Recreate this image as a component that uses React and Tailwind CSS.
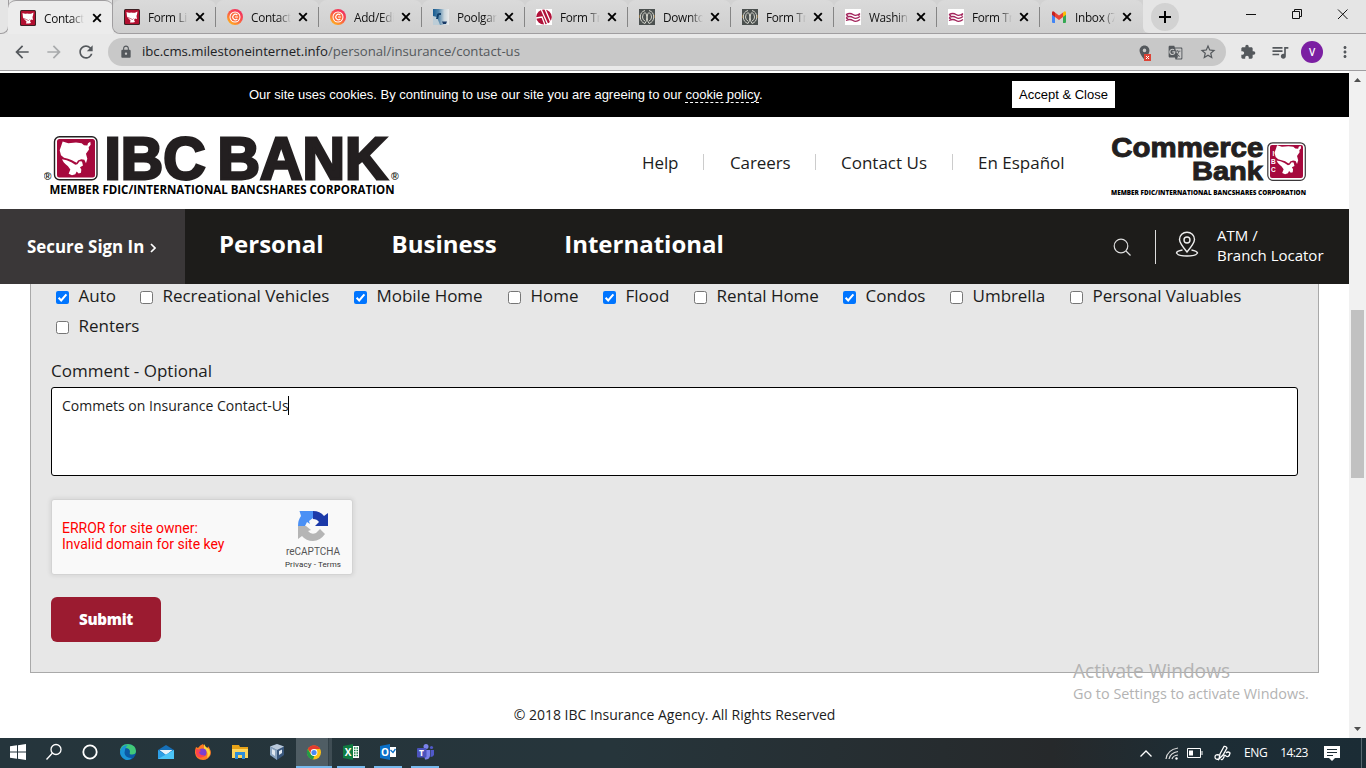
import React from "react";
import {
  MdArrowBack, MdArrowForward, MdRefresh, MdLock, MdStarBorder,
  MdExtension, MdQueueMusic, MdMoreVert, MdGTranslate, MdLocationOn,
} from "react-icons/md";

const US = "M188 96 L205 101 L228 99 L245 101 L252 107 L262 108 L264 101 L271 97 L272 106 L266 113 L267 120 L258 133 L262 148 L258 161 L253 151 L244 149 L234 153 L230 160 L224 157 L216 152 L204 148 L192 145 L183 137 L179 122 L184 108 Z";
const MX = "M186 149 L200 152 L214 158 L226 166 L232 164 L239 155 L246 156 L249 168 L240 173 L244 180 L243 190 L236 192 L230 186 L226 194 L216 197 L206 193 L211 180 L204 170 L197 164 L191 158 Z";

function BankMark() {
  return (
    <svg width="16" height="16" viewBox="0 0 16 16">
      <rect width="16" height="16" rx="1.500" fill="#3b2023" />
      <rect x="1" y="1" width="14" height="14" rx="1" fill="#b20f30" />
      <path d="M2.500 3Q4.500 4.200 7 3.500Q9.500 4 11 3.800L13.500 2.500L13 5.500L12.500 7L13 10L11 9.500L10 11L11 13L9 13.500L6 13.500L6.500 11.500L4.500 9.500L3 7.500Z" fill="#fff" />
      <path d="M4 8.500L8.500 10.500L9.500 9.500" stroke="#b20f30" strokeWidth=".6" fill="none" />
    </svg>
  );
}

function CIcon() {
  return (
    <svg width="16" height="16" viewBox="0 0 16 16">
      <defs><linearGradient id="cg" x1="1" y1="0" x2="0.3" y2="1"><stop offset="0" stopColor="#ee2266" /><stop offset=".5" stopColor="#f94f4c" /><stop offset="1" stopColor="#ffae1f" /></linearGradient></defs>
      <circle cx="8" cy="8" r="8" fill="url(#cg)" />
      <circle cx="8" cy="8" r="5.500" fill="#fff" /><circle cx="8" cy="8" r="4.500" fill="#fb6a3a" />
      <path d="M10.300 6A2.700 2.700 0 1 0 10.300 10M8 8H11" fill="none" stroke="#fff" strokeWidth="1.100" />
    </svg>
  );
}
function PoolIcon() {
  return (
    <svg width="16" height="16" viewBox="0 0 16 16">
      <defs><linearGradient id="pg" x1="0" x2="1"><stop offset="0" stopColor="#165a90" /><stop offset=".35" stopColor="#4f83a8" /><stop offset=".7" stopColor="#c9d5dc" /><stop offset="1" stopColor="#e9eaea" /></linearGradient></defs>
      <path d="M0 0H16V16H0Z" fill="url(#pg)" />
      <path d="M0 7L4 8L7 16H0Z" fill="#bccdd7" /><path d="M4 6Q4 3.500 8 4V6H6L5 10H3Z" fill="#12406b" /><path d="M9 12.500h5l-1 2.500h-3Z" fill="#183a67" />
    </svg>
  );
}
function SlashIcon() {
  return (
    <svg width="16" height="16" viewBox="0 0 16 16">
      <path d="M0 0H16V16H0Z" fill="#fff" /><ellipse cx="8" cy="8" rx="7.800" ry="7.500" fill="#b0123a" />
      <path d="M5 0L12 16M9 0L15 14M0 9L6 8L9 16" stroke="#fff" strokeWidth="1.300" fill="none" />
    </svg>
  );
}
function RingsIcon() {
  return (
    <svg width="16" height="16" viewBox="0 0 16 16">
      <path d="M0 0H16V16H0Z" fill="#4b504f" />
      <g fill="none" stroke="#d3d3cb" strokeWidth="1"><path d="M6 1.500Q1.200 3 1.300 8T6 14.500Q8 12 7.800 8T6 3.500Q3.500 5 3.500 8T6 12" /><path d="M10 1.500Q14.800 3 14.700 8T10 14.500Q8 12 8.200 8T10 3.500Q12.500 5 12.500 8T10 12" /></g>
      <path d="M0 6v3M16 6v3" stroke="#b78338" />
    </svg>
  );
}
function WavesIcon() {
  return (
    <svg width="16" height="16" viewBox="0 0 16 16">
      <path d="M0 0H16V16H0Z" fill="#fff" />
      <path d="M1 5.500q4-2 7 0t7-1M1 8.500q4-2 7 0t7-1M1 11.500q4-2 7 0t7-1M1 5.500l2 1.600M13 6.500l2-1M1 8.700l2 1.400" stroke="#a3255c" strokeWidth="1.300" fill="none" />
    </svg>
  );
}
function GmailIcon() {
  return (
    <svg width="16" height="16" viewBox="0 0 16 16">
      <path d="M1 5l3 2v7H2q-1 0-1-1Z" fill="#4285f4" /><path d="M12 7l3-2v8q0 1-1 1h-2Z" fill="#34a853" />
      <path d="M4 3.500L8 6.500L12 3.500V8L8 11L4 8Z" fill="#ea4335" /><path d="M1 4q0-3 3-.5V8L1 5.700Z" fill="#c5221f" /><path d="M15 4q0-3-3-.5V8L15 5.700Z" fill="#fbbc04" />
    </svg>
  );
}

const tabs = [
  { t: "Form Li", i: <BankMark /> },
  { t: "Contact", i: <CIcon /> },
  { t: "Add/Edi", i: <CIcon /> },
  { t: "Poolgar", i: <PoolIcon /> },
  { t: "Form Tr", i: <SlashIcon /> },
  { t: "Downto", i: <RingsIcon /> },
  { t: "Form Tr", i: <RingsIcon /> },
  { t: "Washin", i: <WavesIcon /> },
  { t: "Form Tr", i: <WavesIcon /> },
  { t: "Inbox (7", i: <GmailIcon /> },
];

function TabInner({ t, i, gap }) {
  return (
    <>
      <div className="h-4 w-4 shrink-0">{i}</div>
      <div className="ml-2 w-10 shrink-0 overflow-hidden whitespace-nowrap text-[11.800px] leading-4 tracking-[-0.3px] text-[#111] [mask-image:linear-gradient(90deg,#000_68%,transparent)]">{t}</div>
      <svg className={"shrink-0 " + gap} width="10" height="10" viewBox="0 0 10 10"><path d="M1.200 1.200L8.800 8.800M8.800 1.200L1.200 8.800" stroke="#000" strokeWidth="1.900" /></svg>
    </>
  );
}

function Chrome() {
  return (
    <div className="h-[71px] bg-[#e9e9e9]">
      <div className="flex h-[34px] bg-[#e5e5e5]">
        <div className="w-[9px] rounded-br-lg border-b border-r border-[#a09ea0]" />
        <div className="-ml-px flex h-[34px] w-[105px] items-center rounded-t-lg border-t border-[#a09ea0] bg-[#ececec] pl-3"><TabInner t="Contact" i={<BankMark />} gap="ml-2" /></div>
        <div className="-ml-px flex flex-1 rounded-bl-lg border-b border-l border-[#a09ea0] bg-[#d2d2d2]">
          {tabs.map((x, k) => (
            <div key={k} className={"flex h-[33px] w-[103px] shrink-0 items-center rounded-t-lg bg-gradient-to-b from-[#dadada] to-[#cfcfcf] pl-[11px] " + (k === 0 ? "rounded-bl-lg" : "")}>
              <TabInner {...x} gap="ml-[7px]" />
              <div className={"ml-auto h-5 w-px " + (k < 9 ? "bg-[#858585]" : "")} />
            </div>
          ))}
          <div className="-mr-px flex flex-1 items-center rounded-bl-md bg-[#e5e5e5] pl-[8px]">
            <div className="grid h-7 w-7 place-items-center rounded-full bg-[#d2d2d2]">
              <svg width="12" height="12" viewBox="0 0 12 12"><path d="M6 0V12M0 6H12" stroke="#000" strokeWidth="2" /></svg>
            </div>
            <svg className="mb-[5px] ml-[67px]" width="112" height="12" viewBox="0 0 112 12" fill="none" stroke="#111"><path d="M0 6.500H10M46.500 3.500H53.500V10.500H46.500ZM48.500 3.500V1.500H55.500V8.500H53.500M92 1.500L101.500 11M101.500 1.500L92 11" /></svg>
          </div>
        </div>
      </div>
      <div className="flex h-[37px] items-center border-b border-[#9f9da0] text-[#54585c]">
        <MdArrowBack className="ml-3 shrink-0" size={20} />
        <MdArrowForward className="ml-3 shrink-0 text-[#a8aaac]" size={20} />
        <MdRefresh className="ml-3 shrink-0" size={20} />
        <div className="ml-3 flex h-7 w-[1118px] items-center rounded-full bg-[#c8c8c8] pl-[11px] pr-[9px]">
          <MdLock size={14} />
          <span className="ml-[9px] text-[13.200px] tracking-[-0.02px] text-[#54585c]"><span className="text-[#202124]">ibc.cms.milestoneinternet.info</span>/personal/insurance/contact-us</span>
          <div className="relative ml-auto">
            <MdLocationOn size={17} />
            <svg className="absolute bottom-0 left-[8px]" width="7" height="7"><path d="M0 0H7V7H0Z" fill="#dc4437" /><path d="M2 2L5 5M5 2L2 5" stroke="#fff" /></svg>
          </div>
          <MdGTranslate className="ml-[15px]" size={15} />
          <MdStarBorder className="ml-[16px]" size={18} />
        </div>
        <MdExtension className="ml-[14px]" size={16} />
        <MdQueueMusic className="ml-[14px]" size={20} />
        <div className="ml-[11px] grid h-[22px] w-[22px] place-items-center rounded-full bg-[#7b1fa2] text-[10px] font-semibold text-white">V</div>
        <MdMoreVert className="ml-[13px]" size={18} />
      </div>
    </div>
  );
}

function Header() {
  return (
    <header className="flex h-[92px] shrink-0 items-start bg-white">
      <svg className="ml-[44px] mt-[16px]" width="358" height="64" viewBox="44 133 358 64" fontFamily="Liberation Sans, sans-serif">
        <rect x="54.500" y="136.800" width="42.500" height="43" rx="5" fill="#fff" stroke="#231f20" strokeWidth="1.400" />
        <rect x="57" y="139" width="38" height="38.500" rx="2.500" fill="#a6093d" />
        <g transform="translate(0 109.500) scale(.3333)" fill="#fff"><path d={US} /><path d={MX} /></g>
        <text x="104.500" y="179" fontSize="59" fontWeight="700" textLength="101" lengthAdjust="spacingAndGlyphs" fill="#231f20" stroke="#231f20" strokeWidth="2.800">IBC</text>
        <text x="217.500" y="179" fontSize="59" fontWeight="700" textLength="170" lengthAdjust="spacingAndGlyphs" fill="#231f20" stroke="#231f20" strokeWidth="2.800">BANK</text>
        <text x="43.800" y="180" fontSize="10.500" fontWeight="700" fill="#231f20">®</text>
        <text x="391" y="180" fontSize="10.500" fontWeight="700" fill="#231f20">®</text>
        <text x="49.500" y="194" fontSize="12" fontWeight="700" fontFamily="Open Sans, sans-serif" textLength="345" lengthAdjust="spacingAndGlyphs">MEMBER FDIC/INTERNATIONAL BANCSHARES CORPORATION</text>
      </svg>
      <nav className="ml-[240px] mt-[34px] flex w-[468px] text-[17px] leading-6 text-[#1c1c1c]">
        <span className="w-[61px] tracking-[-0.1px]">Help</span><i className="mt-[3px] h-4 w-px bg-[#ccc]" />
        <span className="ml-[26px] w-[85px] tracking-[-0.1px]">Careers</span><i className="mt-[3px] h-4 w-px bg-[#ccc]" />
        <span className="ml-[25px] w-[111px]">Contact Us</span><i className="mt-[3px] h-4 w-px bg-[#ccc]" />
        <span className="ml-[25px] whitespace-nowrap">En Español</span>
      </nav>
      <svg className="mt-[16px]" width="198" height="64" viewBox="1110 133 198 64" fontFamily="Liberation Sans, sans-serif" fill="#231f20">
        <text x="1111.300" y="157.300" fontSize="28" fontWeight="700" textLength="152" lengthAdjust="spacingAndGlyphs" stroke="#231f20" strokeWidth="1">Commerce</text>
        <text x="1192" y="180.200" fontSize="26.500" fontWeight="700" textLength="71" lengthAdjust="spacingAndGlyphs" stroke="#231f20" strokeWidth="1">Bank</text>
        <rect x="1267.800" y="142.800" width="37.500" height="37.500" rx="5" fill="#fff" stroke="#3b383a" strokeWidth="1.200" />
        <rect x="1270" y="145" width="33" height="33" rx="2" fill="#a6093d" />
        <g transform="translate(1223.500 118) scale(.285)" fill="#fff"><path d={US} /><path d={MX} /></g>
        <g fill="#fff" fontSize="6.500" fontWeight="700"><text x="1272.500" y="155.500">I</text><text x="1271" y="163.500">B</text><text x="1271" y="171.500">C</text></g>
        <text x="1111" y="195" fontSize="6.500" fontWeight="800" fontFamily="Open Sans, sans-serif" textLength="195" lengthAdjust="spacingAndGlyphs" fill="#000">MEMBER FDIC/INTERNATIONAL BANCSHARES CORPORATION</text>
      </svg>
    </header>
  );
}

const boxes = [["Auto", 1], ["Recreational Vehicles", 0], ["Mobile Home", 1], ["Home", 0], ["Flood", 1], ["Rental Home", 0], ["Condos", 1], ["Umbrella", 0], ["Personal Valuables", 0], ["Renters", 0]];

function Check({ on }) {
  return on ? (
    <svg className="mt-[2px] shrink-0" width="13" height="13" viewBox="0 0 13 13"><rect width="13" height="13" rx="2" fill="#0075ff" /><path d="M2.600 6.800L5.200 9.500L10.400 3.300" stroke="#fff" strokeWidth="2" fill="none" /></svg>
  ) : <div className="mt-[2px] h-[13px] w-[13px] shrink-0 rounded-[2.500px] border border-[#767676] bg-white" />;
}

function Form() {
  return (
    <div className="ml-[30px] h-[389px] w-[1289px] shrink-0 border border-t-0 border-[#a9a9a9] bg-[#e7e7e7] px-5 text-[#1c1c1c]">
      <div className="grid grid-cols-[84px_214px_154px_95px_91px_149px_107px_120px_173px] pl-[5px] text-[17px] leading-[30px] tracking-[-0.05px]">
        {boxes.map(([t, on]) => (
          <label key={t} className="-mt-[3px] mb-[3px] flex h-[30px] items-center whitespace-nowrap">
            <Check on={on} /><span className="ml-[9.600px]">{t}</span>
          </label>
        ))}
      </div>
      <div className="mt-[14px] h-[29px] text-[17px] leading-[26px]">Comment - Optional</div>
      <div className="flex h-[89px] w-[1247px] rounded-[3px] border border-black bg-white pl-[10px] pt-2 text-[14px] leading-5">
        <span>Commets on Insurance Contact-Us</span><span className="-ml-px h-[19px] w-px bg-black" />
      </div>
      <div className="mt-[23px] flex h-[76px] w-[302px] justify-between rounded-[3px] border border-[#d3d3d3] bg-[#f9f9f9] pl-[10px] pr-[9px] font-[Roboto,sans-serif] shadow-[0_0_4px_1px_rgba(0,0,0,0.08)]">
        <div className="mt-5 whitespace-nowrap text-[14px] leading-4 text-[#f00]">ERROR for site owner:<br />Invalid domain for site key</div>
        <div className="flex w-[60px] flex-col items-center pt-[10px] text-[#555]">
          <svg width="32" height="32" viewBox="0 0 32 32">
            <path d="M1 16Q1 10 4 6L2.500 1H16V8L12 11L13 14L10 12L8 16Z" fill="#4a90f5" />
            <path d="M16 1Q23 1 27 6L31 3V16H18L22 12Q20 9 16 9Z" fill="#1c3aa9" />
            <path d="M1 16L9 16L14 20L11 21Q14 25 19 23L23 19L28 24Q23 31 16 31Q9 31 5 26L1 29Z" fill="#b5b5b5" />
          </svg>
          <div className="mt-[2px] text-[10px] leading-4">reCAPTCHA</div>
          <div className="whitespace-nowrap text-[8px] leading-[9px] tracking-[0.12px] text-[#333]">Privacy - Terms</div>
        </div>
      </div>
      <button className="mt-[22px] block h-[45px] w-[110px] rounded-[6px] bg-[#9b1b30] pb-px text-[15.200px] font-extrabold tracking-[-0.3px] text-white">Submit</button>
    </div>
  );
}

function Page() {
  return (
    <main className="flex w-[1349px] flex-col overflow-hidden bg-white pt-[2px] font-['Open_Sans',sans-serif]">
      <div className="flex h-[44px] shrink-0 items-center bg-black pl-[249px] font-['Liberation_Sans',sans-serif] text-[13px] text-white">
        <div className="w-[763px] whitespace-nowrap">Our site uses cookies. By continuing to use our site you are agreeing to our <span className="border-b border-dashed border-white">cookie policy</span>.</div>
        <div className="-mt-px h-[27px] w-[103px] bg-white text-center leading-[27px] text-black">Accept &amp; Close</div>
      </div>
      <Header />
      <div className="flex h-[75px] shrink-0 bg-[#1d1c1a] text-white">
        <div className="flex w-[185px] items-center whitespace-nowrap bg-[#3a3738] pl-[27px] text-[16px] font-bold tracking-[0px]"><span className="text-[16.900px]">Secure Sign In</span>
          <svg className="ml-[6px] mt-[2px] shrink-0" width="6" height="10" viewBox="0 0 6 10" fill="none" stroke="#fff" strokeWidth="1.700"><path d="M1 1L5 5L1 9" /></svg>
        </div>
        <div className="flex w-[928px] items-center pb-[5px] pl-[34px] text-[24px] font-bold">
          <span className="w-[172.600px]">Personal</span><span className="w-[172.600px]">Business</span><span>International</span>
        </div>
        <svg className="mt-[29px]" width="18" height="18" viewBox="0 0 18 18" fill="none" stroke="#ddd" strokeWidth="1.200"><circle cx="8" cy="8" r="6.800" /><path d="M13 13L17.500 17.500" /></svg>
        <div className="ml-[24px] mt-[21px] h-[34px] w-px bg-[#ddd]" />
        <svg className="ml-[19px] mt-[22px]" width="24" height="28" viewBox="0 0 24 28" fill="none" stroke="#eee" strokeWidth="1.400"><path d="M12 21Q4.500 12 4.500 8.500A7.500 7.300 0 0 1 19.500 8.500Q19.500 12 12 21Z" /><circle cx="12" cy="9" r="3" /><path d="M7.500 19Q1.500 20 1.500 22Q3 25 12 25T22.500 22Q22 20 16.500 19" /></svg>
        <div className="ml-[18px] mt-[16px] whitespace-nowrap text-[15px] leading-5">ATM /<br />Branch Locator</div>
      </div>
      <Form />
      <div className="mt-[31px] text-center text-[14px] leading-[22px] text-[#1c1c1c]">© 2018 IBC Insurance Agency. All Rights Reserved</div>
    </main>
  );
}

function Scrollbar() {
  return (
    <div className="flex w-[17px] flex-col items-center bg-[#f1f1f1]">
      <svg className="mt-[7px]" width="7" height="4"><path d="M0 4H7L3.500 0Z" fill="#505050" /></svg>
      <div className="mt-[228px] h-[168px] w-[13px] bg-[#c1c1c1]" />
      <svg className="mt-auto mb-[7px]" width="7" height="4"><path d="M0 0H7L3.500 4Z" fill="#505050" /></svg>
    </div>
  );
}

function Svg({ children }) { return <svg width="18" height="18" viewBox="0 0 18 18">{children}</svg>; }

const apps = [
  <Svg><path d="M1 3.300L8 2.300V8.500H1ZM9 2.200L17 1V8.500H9ZM1 9.500H8V15.700L1 14.700ZM9 9.500H17V17L9 15.800Z" fill="#fff" /></Svg>,
  <Svg><g stroke="#fff" strokeWidth="1.300" fill="none"><circle cx="11" cy="6.500" r="5" /><path d="M7.500 10L1.500 16.500" /></g></Svg>,
  <Svg><circle cx="9" cy="9" r="6.700" stroke="#fff" strokeWidth="1.800" fill="none" /></Svg>,
  <Svg><circle cx="9" cy="9" r="8" fill="#0c59a4" /><path d="M1 9Q1 1 9 1Q17 2 17 8Q17 12 12 11.500Q10 11 11 9Q11 5 6 5Q2 5 1 9Z" fill="#42c978" /><path d="M1 9Q2 2 9 2Q6 4 5.500 10Q6 15 13 15Q10 18 6 16.500Q1 14 1 9Z" fill="#1b94d6" /></Svg>,
  <Svg><path d="M1 7L9 2L17 7V16H1Z" fill="#1670b8" /><path d="M2.500 7H15.500L9 12Z" fill="#e8f3fb" /><path d="M1 7L9 12L17 7V16H1Z" fill="#2c9fe6" /><path d="M17 7L1 16H17Z" fill="#4bc4f7" /></Svg>,
  <Svg><path d="M2 4L4 5Q6 2 9 1Q10 4 13 5Q15 3 14 3Q18 8 16.500 12Q14 17 9 17Q2 17 1 10Q1 6 2 4Z" fill="#ff7a22" /><path d="M10 1Q11 4 15 6Q18 12 13 15Q15 9 10 6Z" fill="#ffd43b" /><circle cx="8.500" cy="9.500" r="4" fill="#7b3fd0" /><path d="M2 6Q5 6 7 8L5 9Q6 13 11 12Q8 16 4 14Q1 11 2 6Z" fill="#ff4250" /></Svg>,
  <Svg><path d="M1 2H8L9 4H17V15H1Z" fill="#e8a317" /><path d="M1 6H17V15H1Z" fill="#ffd75e" /><path d="M4 9H14V16H11V12H7V16H4Z" fill="#2f8fdb" /></Svg>,
  <Svg><path d="M9 1L16 3.500V12L9 17L2 12V3.500Z" fill="#39577c" /><path d="M9 1L16 3.500L9 7L2 3.500Z" fill="#b9c9db" /><path d="M2 3.500L9 7V17L2 12Z" fill="#8aa4c0" /><path d="M4 6L7 7.500V13L4 11ZM11 8L14 6.500V10L11 12Z" fill="#e1e9f2" /></Svg>,
  <Svg><circle cx="9" cy="9.500" r="7" fill="#fbc116" /><path d="M2.800 6A7 7 0 0 1 15.200 6H9L6 10Z" fill="#e33b2e" /><path d="M2.800 6L6 11.500L9.500 12.500L8 16.500A7 7 0 0 1 2.800 6Z" fill="#249a48" /><circle cx="9" cy="9.500" r="3.400" fill="#fff" /><circle cx="9" cy="9.500" r="2.600" fill="#4a89f3" /></Svg>,
  <Svg><path d="M10 3H17V15H10Z" fill="#fff" /><path d="M1 3L11 1V17L1 15Z" fill="#107c41" /><path d="M12 5H13.500M14.500 5H16M12 7.500H13.500M14.500 7.500H16M12 10H13.500M14.500 10H16M12 12.500H13.500M14.500 12.500H16" stroke="#107c41" strokeWidth="1.300" /><text x="2.800" y="12.500" fontSize="10" fontWeight="700" fill="#fff">X</text></Svg>,
  <Svg><path d="M10 4H17V14H10Z" fill="#fff" /><path d="M1 3L11 1V17L1 15Z" fill="#0a70c9" /><path d="M11 5H17V13H11Z" fill="#fff" /><path d="M11.500 7L14 9.500L16.500 6" stroke="#0a70c9" fill="none" strokeWidth="1.300" /><text x="2" y="12.500" fontSize="10" fontWeight="700" fill="#fff">O</text></Svg>,
  <Svg><circle cx="10" cy="3.500" r="2.500" fill="#7b83eb" /><circle cx="15.500" cy="4.500" r="1.600" fill="#5059c9" /><path d="M7 7H14V13Q13 17 9 16.500Z" fill="#7b83eb" /><path d="M14.500 7H18V12Q17 14 14.500 14Z" fill="#5059c9" /><rect x="1" y="5" width="9.500" height="9.500" rx="1" fill="#4b53bc" /><text x="3" y="13" fontSize="8.500" fontWeight="700" fill="#fff">T</text></Svg>,
];

function Taskbar() {
  return (
    <div className="flex h-[30px] bg-[linear-gradient(90deg,#25353c_0%,#26353b_45%,#26292b_77%,#1d2d35_88%,#1b2c35_100%)] text-white">
      <div className="grid grid-cols-[36px_35px_38px_38px_37px_37px_37px_38px_36px_37px_37px_37px]">
        {apps.map((a, i) => (
          <div key={i} className={"grid h-[30px] place-items-center border-b-2 " + (i === 8 ? "border-[#76b9ed] bg-[linear-gradient(90deg,#4f5d64_32px,#28363d_32px,#3f4d54_33px)]" : "border-transparent")}>
            {i > 8 ? <div className="flex h-[30px] w-7 items-center justify-center border-b-2 border-[#76b9ed]">{a}</div> : a}
          </div>
        ))}
      </div>
      <div className="ml-auto flex w-[226px] items-center text-[12px] tracking-[-0.2px]">
        <svg width="12" height="7" viewBox="0 0 12 7" fill="none" stroke="#fff" strokeWidth="1.300"><path d="M.5 6.500L6 1L11.500 6.500" /></svg>
        <svg className="ml-[13px]" width="14" height="13" viewBox="0 0 14 13" fill="none" stroke="#ddd" strokeWidth="1.200"><path d="M1 12Q2 3 13 1M4 12Q5 6 13 4.500M7 12Q8 8.500 13 8" /><circle cx="11.500" cy="11.500" r="1.200" fill="#fff" stroke="none" /></svg>
        <svg className="ml-[8px]" width="16" height="10" viewBox="0 0 16 10" fill="none" stroke="#fff"><path d="M.5 .5H13.500V9.500H.5ZM15 3V7" /><path d="M2 2.500H6V7.500H2Z" fill="#fff" stroke="none" /></svg>
        <svg className="ml-[11px]" width="17" height="17" viewBox="0 0 17 17" fill="none" stroke="#fff" strokeWidth="1.300"><path d="M5 14L6 9L10 1.500Q12 1 13 3L9 10L5 14ZM5 10Q1 9 1 12Q1 15 5 14M7 14Q8 16 10 12Q10 9 12 11Q15 13 16 8Q14 6 12 8" /></svg>
        <span className="ml-[13px] tracking-[-0.4px]">ENG</span><span className="ml-[13px] w-[44px] tracking-[-0.6px]">14:23</span>
        <svg width="16" height="17" viewBox="0 0 16 17"><path d="M0 1H16V13H11L8 16L5 13H0Z" fill="#fff" /><path d="M3 4.500H13M3 7.500H13M3 10.500H9" stroke="#1d2d35" /></svg>
        <div className="ml-auto mr-[4px] h-[30px] w-px bg-[#58676f]" />
      </div>
    </div>
  );
}

export default function App() {
  return (
    <div className="relative flex h-[768px] w-[1366px] flex-col overflow-hidden bg-white font-['Open_Sans',sans-serif]">
      <Chrome />
      <div className="flex h-[667px]"><Page /><Scrollbar /></div>
      <Taskbar />
      <div className="absolute left-[1073px] top-[658px] whitespace-nowrap text-[#b3b3b3]">
        <div className="text-[19.150px] leading-[26px]">Activate Windows</div>
        <div className="text-[14.400px] leading-[20px]">Go to Settings to activate Windows.</div>
      </div>
    </div>
  );
}
